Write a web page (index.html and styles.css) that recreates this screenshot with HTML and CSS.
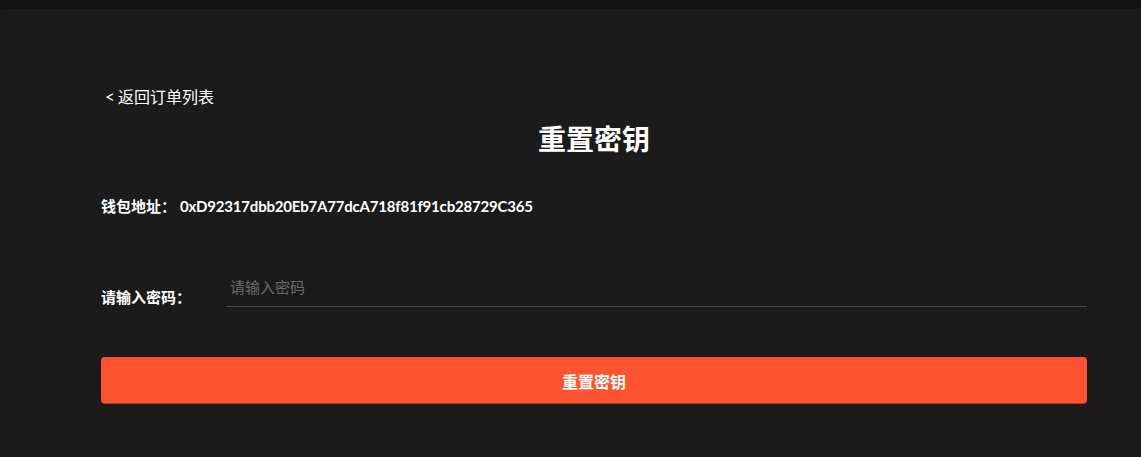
FILE: index.html
```html
<!DOCTYPE html>
<html lang="zh-CN">
<head>
<meta charset="utf-8">
<title>重置密钥</title>
<link rel="stylesheet" href="styles.css">
</head>
<body>
<main class="card">
  <a class="back" href="#"><span class="chev">&lt;</span>返回订单列表</a>
  <h1 class="title">重置密钥</h1>
  <p class="wallet">钱包地址：<span class="addr">0xD92317dbb20Eb7A77dcA718f81f91cb28729C365</span></p>
  <div class="field">
    <label class="label" for="pwd">请输入密码：</label>
    <input class="input" id="pwd" type="password" placeholder="请输入密码">
  </div>
  <button class="btn" type="button">重置密钥</button>
</main>
</body>
</html>
```
FILE: styles.css
```css
html, body {
  margin: 0;
  padding: 0;
  background: #121212;
  height: 100%;
  overflow: hidden;
}
body {
  padding-top: 9px;
  box-sizing: border-box;
  font-family: Lato, "Noto Sans CJK SC", sans-serif;
  color: #fff;
}
.card {
  background: #1b1b1b;
  border-radius: 4px 0 0 0;
  padding: 78px 54px 60px 101px;
  min-height: 100%;
  box-sizing: border-box;
  display: flex;
  flex-direction: column;
}
.back {
  align-self: flex-start;
  color: #fff;
  text-decoration: none;
  font-size: 16px;
  line-height: 20px;
  padding-left: 4px;
}
.chev {
  display: inline-block;
  margin-right: 3px;
  font-size: 17px;
}
.title {
  margin: 14px 0 0;
  text-align: center;
  font-size: 28px;
  line-height: 36px;
  font-weight: 700;
}
.wallet {
  margin: 39px 0 0;
  font-size: 15px;
  line-height: 20px;
  font-weight: 700;
}
.addr {
  margin-left: 4px;
  letter-spacing: -0.2px;
}
.field {
  margin-top: 54px;
  display: flex;
  align-items: flex-end;
}
.label {
  width: 126px;
  flex: none;
  font-size: 15px;
  line-height: 20px;
  font-weight: 700;
}
.input {
  flex: 1;
  height: 37px;
  box-sizing: border-box;
  background: transparent;
  border: none;
  border-bottom: 1px solid #4a4a4a;
  outline: none;
  padding: 0 3px 2px;
  font-family: Lato, "Noto Sans CJK SC", sans-serif;
  font-size: 15px;
  color: #fff;
}
.input::placeholder {
  color: #6b6b6b;
}
.btn {
  margin-top: 50px;
  height: 47px;
  border: none;
  border-radius: 4px;
  background: #fe5330;
  box-shadow: inset 0 -1px 0 rgba(0, 0, 0, 0.3);
  color: #fff;
  font-family: Lato, "Noto Sans CJK SC", sans-serif;
  font-size: 16px;
  font-weight: 700;
}
```
